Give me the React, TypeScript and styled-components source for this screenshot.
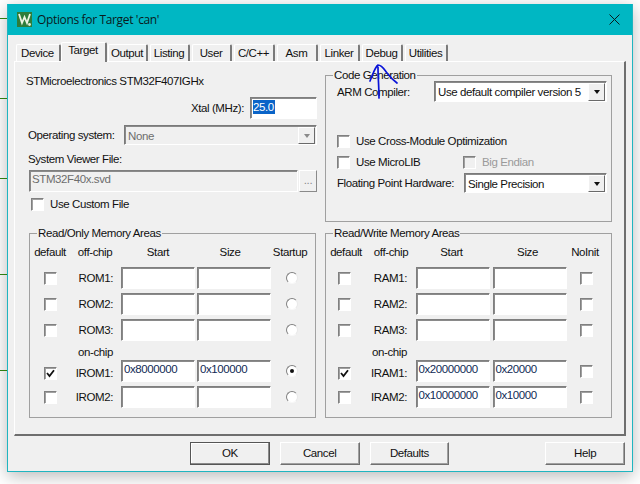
import React from "react";
import styled, { createGlobalStyle } from "styled-components";

const Global = createGlobalStyle`
  html, body { margin: 0; padding: 0; background: #fff; width: 640px; height: 484px; overflow: hidden; }
  #root { width: 640px; height: 484px; }
  * { box-sizing: border-box; }
`;

const Desktop = styled.div`
  position: relative;
  width: 640px;
  height: 484px;
  padding: 4px 0 0 7px;
  background: #fff;
  font-family: "Liberation Sans", Arial, sans-serif;
  font-size: 11.5px;
  letter-spacing: -0.4px;
  white-space: nowrap;
  color: #111;
  overflow: hidden;
`;
const Wire = styled.div<{ $y: number }>`
  position: absolute;
  left: 0;
  top: ${(p) => p.$y}px;
  width: 7px;
  height: 1px;
  background: #2e7d10;
`;
const Window = styled.div`
  width: 626px;
  height: 468px;
  background: #f0f0f0;
  border: 1px solid #1fb5c0;
  border-top: 0;
  box-shadow: 0 4px 16px rgba(0, 0, 0, 0.28);
  display: flex;
  flex-direction: column;
`;
const TitleBar = styled.div`
  height: 31px;
  flex: none;
  background: #00b7c3;
  display: flex;
  align-items: center;
  padding: 0 12px 0 9px;
  gap: 5px;
  font-family: "Open Sans", sans-serif;
  font-size: 12px;
  letter-spacing: -0.35px;
  color: #0a1a1c;
`;
const TitleText = styled.span`
  flex: 1;
`;
const Body = styled.div`
  flex: 1;
  padding: 4px 7px 0 6px;
  display: flex;
  flex-direction: column;
`;
const TabStrip = styled.div`
  height: 22px;
  flex: none;
  display: flex;
  align-items: flex-end;
  padding-left: 2px;
  gap: 2px;
`;
const Tab = styled.div<{ $w: number; $active?: boolean; $gap?: number }>`
  width: ${(p) => p.$w}px;
  height: ${(p) => (p.$active ? 20 : 17)}px;
  margin-left: ${(p) => p.$gap ?? 0}px;
  margin-bottom: ${(p) => (p.$active ? -1 : 0)}px;
  position: relative;
  z-index: ${(p) => (p.$active ? 2 : 1)};
  background: #f0f0f0;
  border: 1px solid #fff;
  border-bottom: 0;
  border-right: 2px solid #7a7a7a;
  border-radius: 2px 2px 0 0;
  text-align: center;
  line-height: ${(p) => (p.$active ? 14 : 16)}px;
  padding-right: 1px;
`;
const Panel = styled.div`
  width: 612px;
  height: 375px;
  flex: none;
  border: 1px solid #fff;
  border-right: 2px solid #6e6e6e;
  border-bottom: 2px solid #6e6e6e;
  display: grid;
  grid-template-columns: 296px 287px;
  padding: 6px 0 0 14px;
`;
const Column = styled.div`
  display: flex;
  flex-direction: column;
`;
const LeftTop = styled.div`
  height: 158px;
  flex: none;
  display: flex;
  flex-direction: column;
  padding-right: 8px;
`;
const DeviceName = styled.div`
  height: 14px;
  line-height: 14px;
  margin: 6px 0 0 -3px;
`;
const XtalRow = styled.div`
  display: flex;
  justify-content: flex-end;
  align-items: center;
  gap: 6px;
  margin-top: 9px;
  height: 22px;
`;
const Sunken = styled.div<{ $w: number; $disabled?: boolean }>`
  width: ${(p) => p.$w}px;
  height: 22px;
  flex: none;
  background: ${(p) => (p.$disabled ? "#f0f0f0" : "#fff")};
  color: ${(p) => (p.$disabled ? "#6d6d6d" : "#111")};
  border-style: solid;
  border-width: 1px;
  border-color: #7f7f7f #fff #fff #7f7f7f;
  box-shadow: inset 1px 1px 0 #8a8a8a;
  padding: 2px 0 0 2px;
  line-height: 13px;
  display: flex;
  align-items: flex-start;
`;
const Selected = styled.span`
  background: #0a64c8;
  color: #fff;
  padding: 0 1px 0 0;
  line-height: 14px;
`;
const OsRow = styled.div`
  display: flex;
  align-items: center;
  justify-content: space-between;
  margin: 6px 0 0 -1px;
  height: 20px;
`;
const Combo = styled.div<{ $w: number; $h: number; $disabled?: boolean }>`
  width: ${(p) => p.$w}px;
  height: ${(p) => p.$h}px;
  flex: none;
  background: ${(p) => (p.$disabled ? "#f0f0f0" : "#fff")};
  color: ${(p) => (p.$disabled ? "#6d6d6d" : "#111")};
  border: 1px solid;
  border-color: #7a7a7a #fff #fff #7a7a7a;
  box-shadow: inset 1px 1px 0 #8a8a8a;
  display: flex;
  align-items: center;
  justify-content: space-between;
  padding: 1px 1px 0 3px;
`;
const ComboButton = styled.div<{ $disabled?: boolean }>`
  width: 17px;
  height: 100%;
  flex: none;
  background: #f0f0f0;
  border: 1px solid;
  border-color: #fff #6a6a6a #6a6a6a #fff;
  display: flex;
  align-items: center;
  justify-content: center;
  &::after {
    content: "";
    border-style: solid;
    border-width: 4px 3.5px 0;
    border-color: ${(p) => (p.$disabled ? "#8a8a8a" : "#111")} transparent transparent;
  }
`;
const FieldLabel = styled.div`
  margin: 7px 0 0 -1px;
  height: 14px;
  line-height: 14px;
`;
const FileRow = styled.div`
  display: flex;
  margin-top: 4px;
  gap: 1px;
`;
const Ellipsis = styled.div`
  width: 18px;
  height: 22px;
  color: #8a8a8a;
  background: #f0f0f0;
  border: 1px solid;
  border-color: #fff #8a8a8a #8a8a8a #fff;
  text-align: center;
  line-height: 18px;
`;
const CheckRow = styled.label<{ $muted?: boolean }>`
  display: flex;
  align-items: center;
  height: 14px;
  gap: 6px;
  color: ${(p) => (p.$muted ? "#9a9a9a" : "inherit")};
`;
const CustomRow = styled(CheckRow)`
  margin: 5px 0 0 2px;
`;
const CheckBox = styled.span<{ $muted?: boolean }>`
  width: 13px;
  height: 13px;
  flex: none;
  background: ${(p) => (p.$muted ? "#f0f0f0" : "#fff")};
  border: 1px solid;
  border-color: #808080 #fff #fff #808080;
  box-shadow: inset 1px 1px 0 #a0a0a0;
  display: inline-flex;
  align-items: center;
  justify-content: center;
`;
const Group = styled.fieldset<{ $h: number; $top?: number }>`
  width: 287px;
  height: ${(p) => p.$h}px;
  margin: ${(p) => p.$top ?? 0}px 0 0;
  padding: 0;
  border: 1px solid #a0a0a0;
  min-width: 0;
`;
const Legend = styled.legend`
  margin-left: 7px;
  padding: 0 1px;
  line-height: 14px;
`;
const CompilerRow = styled.div`
  display: flex;
  align-items: center;
  justify-content: space-between;
  padding: 0 4px 0 11px;
  height: 21px;
  margin-top: -1px;
`;
const CodeChecks = styled.div`
  display: grid;
  grid-template-columns: 126px auto;
  row-gap: 7px;
  margin: 32px 0 0 11px;
`;
const WideCheck = styled.div`
  grid-column: 1 / 3;
`;
const FpRow = styled(CompilerRow)`
  margin-top: 4px;
  height: 20px;
`;
const MemoryGrid = styled.div<{ $cols: string }>`
  display: grid;
  grid-template-columns: ${(p) => p.$cols};
  grid-template-rows: 23px 22px 22px 22px 11px 22px 22px;
  row-gap: 4px;
  align-items: center;
`;
const Head = styled.div<{ $shift: number }>`
  text-align: center;
  line-height: 14px;
  padding-left: ${(p) => Math.max(p.$shift, 0) * 2}px;
  padding-right: ${(p) => Math.max(-p.$shift, 0) * 2}px;
`;
const RowLabel = styled.div<{ $low?: boolean }>`
  text-align: right;
  padding-right: 7px;
  margin-top: ${(p) => (p.$low ? 4 : 0)}px;
`;
const OnChip = styled(RowLabel)`
  margin-top: 3px;
  line-height: 14px;
  height: 14px;
`;
const Cell = styled.div<{ $low?: boolean }>`
  display: flex;
  justify-content: center;
  align-items: center;
  margin-top: ${(p) => (p.$low ? 4 : 0)}px;
`;
const Radio = styled.span<{ $on?: boolean }>`
  width: 12px;
  height: 12px;
  border-radius: 50%;
  background: #fff;
  border: 1px solid;
  border-color: #808080 #e8e8e8 #f8f8f8 #808080;
  display: inline-flex;
  align-items: center;
  justify-content: center;
  &::after {
    content: "";
    width: 4px;
    height: 4px;
    border-radius: 50%;
    background: ${(p) => (p.$on ? "#111" : "transparent")};
  }
`;
const Value = styled.span`
  color: #102a55;
`;
const Footer = styled.div`
  flex: 1;
  display: flex;
  padding: 6px 0 0 176px;
`;
const Button = styled.div<{ $gap: number; $default?: boolean }>`
  width: 80px;
  height: 23px;
  margin-left: ${(p) => p.$gap}px;
  background: #f0f0f0;
  border: 1px solid;
  border-color: ${(p) => (p.$default ? "#555" : "#fff #707070 #707070 #fff")};
  box-shadow: ${(p) => (p.$default ? "inset -1px -1px 0 #8a8a8a, inset 1px 1px 0 #fff" : "inset -1px -1px 0 #a0a0a0")};
  text-align: center;
  line-height: 20px;
`;
const Annotation = styled.svg`
  position: absolute;
  left: 360px;
  top: 55px;
  overflow: visible;
`;

const Check = ({ on }: { on?: boolean }) => (
  <CheckBox>
    {on && (
      <svg width="9" height="9" viewBox="0 0 9 9">
        <path d="M1 4 L3.5 7 L8 1.2" fill="none" stroke="#111" strokeWidth="1.8" />
      </svg>
    )}
  </CheckBox>
);

const Logo = () => (
  <svg width="15" height="15" viewBox="0 0 15 15">
    <rect width="15" height="15" fill="#2f7d3a" />
    <path d="M2 2 L5 11 L7.5 5 L10 11 L13 2" fill="none" stroke="#eef3e2" strokeWidth="1.8" />
    <circle cx="12.5" cy="12.5" r="1.4" fill="#e8efd8" />
  </svg>
);

type Row = { label: string; on?: boolean; start?: string; size?: string; radio?: boolean; low?: boolean };

const MemoryRows = ({ rows, mark }: { rows: Row[]; mark: "radio" | "check" }) => (
  <>
    {rows.map((r) => (
      <React.Fragment key={r.label}>
        <Cell $low={r.low}><Check on={r.on} /></Cell>
        <RowLabel $low={r.low}>{r.label}</RowLabel>
        <Cell><Sunken $w={74}><Value>{r.start}</Value></Sunken></Cell>
        <Cell><Sunken $w={74}><Value>{r.size}</Value></Sunken></Cell>
        <Cell>{mark === "radio" ? <Radio $on={r.radio} /> : <Check />}</Cell>
      </React.Fragment>
    ))}
  </>
);

const Memory = ({
  heads, shifts, off, on, mark, cols,
}: { heads: string[]; shifts: number[]; off: Row[]; on: Row[]; mark: "radio" | "check"; cols: string }) => (
  <MemoryGrid $cols={cols}>
    {heads.map((h, i) => (
      <Head key={h} $shift={shifts[i]}>{h}</Head>
    ))}
    <MemoryRows rows={off} mark={mark} />
    <span />
    <OnChip>on-chip</OnChip>
    <span /><span /><span />
    <MemoryRows rows={on} mark={mark} />
  </MemoryGrid>
);

const tabs: { t: string; w: number; gap?: number; active?: boolean }[] = [
  { t: "Device", w: 45 },
  { t: "Target", w: 46, active: true, gap: -2 },
  { t: "Output", w: 40, gap: -1 },
  { t: "Listing", w: 40 },
  { t: "User", w: 40 },
  { t: "C/C++", w: 41 },
  { t: "Asm", w: 41 },
  { t: "Linker", w: 40 },
  { t: "Debug", w: 41 },
  { t: "Utilities", w: 43 },
];

export default function App() {
  return (
    <Desktop>
      <Global />
      {[18, 98, 178, 274, 370].map((y) => <Wire key={y} $y={y} />)}
      <Window>
        <TitleBar>
          <Logo />
          <TitleText>Options for Target 'can'</TitleText>
          <svg width="11" height="11" viewBox="0 0 11 11">
            <path d="M.5.5 10.5 10.5M10.5.5.5 10.5" stroke="#0a1a1c" strokeWidth="1" fill="none" />
          </svg>
        </TitleBar>
        <Body>
          <TabStrip>
            {tabs.map((t) => (
              <Tab key={t.t} $w={t.w} $active={t.active} $gap={t.gap}>{t.t}</Tab>
            ))}
          </TabStrip>
          <Panel>
            <Column>
              <LeftTop>
                <DeviceName>STMicroelectronics STM32F407IGHx</DeviceName>
                <XtalRow>
                  <span>Xtal (MHz):</span>
                  <Sunken $w={67}><Selected>25.0</Selected></Sunken>
                </XtalRow>
                <OsRow>
                  <span>Operating system:</span>
                  <Combo $w={193} $h={20} $disabled>
                    None
                    <ComboButton $disabled />
                  </Combo>
                </OsRow>
                <FieldLabel>System Viewer File:</FieldLabel>
                <FileRow>
                  <Sunken $w={269} $disabled>STM32F40x.svd</Sunken>
                  <Ellipsis>...</Ellipsis>
                </FileRow>
                <CustomRow><Check />Use Custom File</CustomRow>
              </LeftTop>
              <Group $h={192}>
                <Legend>Read/Only Memory Areas</Legend>
                <Memory
                  mark="radio"
                  cols="40px 50px 76px 76px 40px"
                  heads={["default", "off-chip", "Start", "Size", "Startup"]}
                  shifts={[0, 0, 0, -4, -2]}
                  off={[{ label: "ROM1:" }, { label: "ROM2:" }, { label: "ROM3:" }]}
                  on={[
                    { label: "IROM1:", on: true, start: "0x8000000", size: "0x100000", radio: true, low: true },
                    { label: "IROM2:" },
                  ]}
                />
              </Group>
            </Column>
            <Column>
              <Group $h={154}>
                <Legend>Code Generation</Legend>
                <CompilerRow>
                  <span>ARM Compiler:</span>
                  <Combo $w={173} $h={21}>
                    Use default compiler version 5
                    <ComboButton />
                  </Combo>
                </CompilerRow>
                <CodeChecks>
                  <WideCheck><CheckRow><Check />Use Cross-Module Optimization</CheckRow></WideCheck>
                  <CheckRow><Check />Use MicroLIB</CheckRow>
                  <CheckRow $muted><CheckBox $muted />Big Endian</CheckRow>
                </CodeChecks>
                <FpRow>
                  <span>Floating Point Hardware:</span>
                  <Combo $w={143} $h={20}>
                    Single Precision
                    <ComboButton />
                  </Combo>
                </FpRow>
              </Group>
              <Group $h={192} $top={4}>
                <Legend>Read/Write Memory Areas</Legend>
                <Memory
                  mark="check"
                  cols="36px 52px 77px 77px 36px"
                  heads={["default", "off-chip", "Start", "Size", "NoInit"]}
                  shifts={[2, 3, -1, -2, -1]}
                  off={[{ label: "RAM1:" }, { label: "RAM2:" }, { label: "RAM3:" }]}
                  on={[
                    { label: "IRAM1:", on: true, start: "0x20000000", size: "0x20000", low: true },
                    { label: "IRAM2:", start: "0x10000000", size: "0x10000" },
                  ]}
                />
              </Group>
            </Column>
          </Panel>
          <Footer>
            <Button $gap={0} $default>OK</Button>
            <Button $gap={10}>Cancel</Button>
            <Button $gap={10}>Defaults</Button>
            <Button $gap={96}>Help</Button>
          </Footer>
        </Body>
      </Window>
      <Annotation width="50" height="50" viewBox="0 0 50 50">
        <path d="M19 43 C19 33 18 22 18 12 M10 26 C13 19 15 12 18 10 C22 10 24 14 27 18 C30 22 33 25 37 28" fill="none" stroke="#0a14d8" strokeWidth="1.7" strokeLinecap="round" />
      </Annotation>
    </Desktop>
  );
}
